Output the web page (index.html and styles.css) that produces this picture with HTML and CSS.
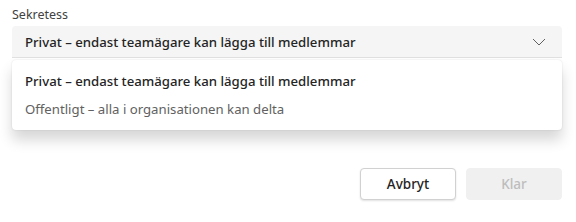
FILE: index.html
```html
<!DOCTYPE html>
<html lang="sv">
<head>
<meta charset="utf-8">
<link rel="stylesheet" href="styles.css">
</head>
<body>
<div class="dialog">
  <div class="field">
    <div class="label">Sekretess</div>
    <div class="dropdown-wrap">
      <div class="dropdown">
        <span class="value">Privat – endast teamägare kan lägga till medlemmar</span>
        <svg class="chevron" width="14" height="8" viewBox="0 0 14 8"><path d="M1 1 L7 7 L13 1" fill="none" stroke="#616161" stroke-width="1"/></svg>
      </div>
      <div class="listbox">
        <div class="option selected">Privat – endast teamägare kan lägga till medlemmar</div>
        <div class="option">Offentligt – alla i organisationen kan delta</div>
      </div>
    </div>
  </div>
  <div class="actions">
    <button class="btn secondary">Avbryt</button>
    <button class="btn disabled">Klar</button>
  </div>
</div>
</body>
</html>
```

FILE: styles.css
```css
html, body {
  margin: 0;
  padding: 0;
  background: #ffffff;
}
body {
  font-family: "Noto Sans", "Open Sans", sans-serif;
  color: #242424;
}
.dialog {
  width: 576px;
  height: 222px;
  padding: 6px 14px 0 12px;
  box-sizing: border-box;
  display: flex;
  flex-direction: column;
}
.label {
  font-size: 12.5px;
  line-height: 18px;
  color: #424242;
  margin-bottom: 2px;
}
.dropdown-wrap {
  position: relative;
}
.dropdown {
  height: 31px;
  background: #f5f5f5;
  border-bottom: 1px solid #e0e0e0;
  border-radius: 4px 4px 0 0;
  display: flex;
  align-items: center;
  justify-content: space-between;
  padding: 0 16px 0 13px;
}
.value {
  font-size: 13.2px;
  font-weight: 500;
  color: #242424;
}
.listbox {
  position: absolute;
  left: 0;
  right: 0;
  top: 34px;
  background: #ffffff;
  border-radius: 4px;
  padding: 7px 0;
  box-shadow: 0 0 2px rgba(0,0,0,0.12), 0 10px 14px rgba(0,0,0,0.16);
}
.option {
  height: 28px;
  display: flex;
  align-items: center;
  padding: 0 13px;
  font-size: 13.2px;
  color: #616161;
}
.option.selected {
  font-weight: 500;
  color: #242424;
}
.actions {
  margin-top: 110px;
  display: flex;
  justify-content: flex-end;
  gap: 10px;
}
.btn {
  width: 96px;
  height: 32px;
  border-radius: 4px;
  font-family: inherit;
  font-size: 13.5px;
  font-weight: 500;
}
.btn.secondary {
  background: #ffffff;
  border: 1px solid #d1d1d1;
  color: #242424;
  box-shadow: 0 1px 2px rgba(0,0,0,0.12);
}
.btn.disabled {
  background: #f0f0f0;
  border: 1px solid #f0f0f0;
  color: #bdbdbd;
}
```
